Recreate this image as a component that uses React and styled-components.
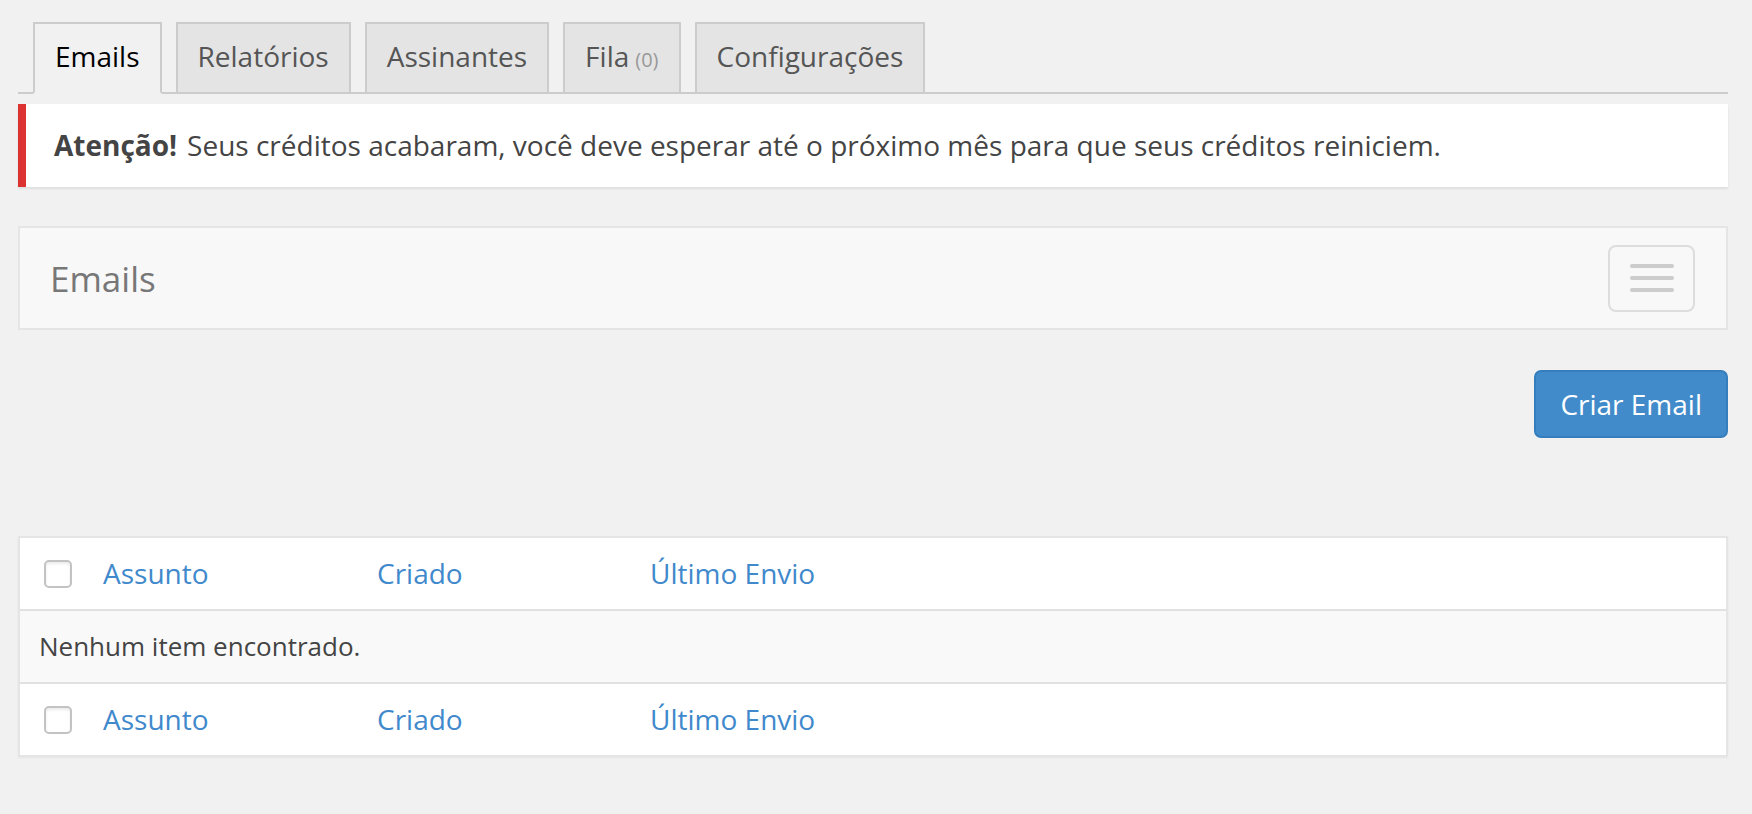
import React from 'react';
import styled, { createGlobalStyle } from 'styled-components';

const GlobalStyle = createGlobalStyle`
  html, body {
    margin: 0;
    padding: 0;
    background: #f1f1f1;
    font-family: 'Open Sans', 'Liberation Sans', sans-serif;
    color: #444;
  }
`;

const Page = styled.div`
  padding: 22px 24px 40px 18px;
`;

const TabBar = styled.nav`
  display: flex;
  border-bottom: 2px solid #ccc;
  padding-left: 15px;
`;

const Tab = styled.a`
  display: block;
  margin-right: 14px;
  margin-bottom: -2px;
  padding: 10px 20px;
  border: 2px solid #ccc;
  border-bottom: 2px solid ${p => (p.active ? '#f1f1f1' : '#ccc')};
  background: ${p => (p.active ? '#f1f1f1' : '#e4e4e4')};
  color: ${p => (p.active ? '#000' : '#555')};
  font-size: 28px;
  line-height: 45px;
  text-decoration: none;
  white-space: nowrap;
`;

const Count = styled.span`
  font-size: 20px;
  color: #999;
  margin-left: 6px;
`;

const Notice = styled.div`
  margin-top: 10px;
  padding: 2px 24px;
  background: #fff;
  border-left: 8px solid #dc3232;
  box-shadow: 0 2px 2px rgba(0, 0, 0, 0.08);

  p {
    margin: 16px 0;
    padding: 4px;
    font-size: 28px;
    line-height: 39px;
    color: #444;
  }

  strong {
    font-weight: 700;
    margin-right: 10px;
  }
`;

const Postbox = styled.div`
  margin-top: 39px;
  height: 100px;
  display: flex;
  align-items: center;
  justify-content: space-between;
  padding: 0 31px 0 30px;
  background: #f8f8f8;
  border: 2px solid #e5e5e5;
`;

const PanelTitle = styled.h2`
  margin: 0;
  font-size: 35px;
  font-weight: 400;
  color: #777;
`;

const MenuButton = styled.button`
  width: 87px;
  height: 67px;
  display: flex;
  flex-direction: column;
  align-items: center;
  justify-content: center;
  gap: 8px;
  padding: 0;
  background: transparent;
  border: 2px solid #ddd;
  border-radius: 8px;

  span {
    display: block;
    width: 44px;
    height: 4px;
    border-radius: 2px;
    background: #ccc;
  }
`;

const Actions = styled.div`
  display: flex;
  justify-content: flex-end;
  margin-top: 40px;
`;

const PrimaryButton = styled.button`
  height: 68px;
  padding: 0 24px;
  background: #428bca;
  border: 2px solid #357ebd;
  border-radius: 7px;
  color: #fff;
  font-family: 'Open Sans', 'Liberation Sans', sans-serif;
  font-size: 28px;
`;

const Table = styled.div`
  margin-top: 98px;
  background: #fff;
  border: 2px solid #e5e5e5;
  box-shadow: 0 1px 2px rgba(0, 0, 0, 0.05);
`;

const Row = styled.div`
  display: grid;
  grid-template-columns: 67px 274px 273px 1fr;
  align-items: center;
  height: 71px;
  background: ${p => (p.alt ? '#f9f9f9' : '#fff')};
  border-top: ${p => (p.first ? 'none' : '2px solid #e1e1e1')};
`;

const CheckCell = styled.div`
  padding-left: 24px;
  display: flex;
  align-items: center;
`;

const Checkbox = styled.span`
  display: block;
  width: 28px;
  height: 28px;
  box-sizing: border-box;
  border: 2px solid #c3c3c3;
  border-radius: 5px;
  background: #fff;
  box-shadow: inset 0 2px 3px rgba(0, 0, 0, 0.08);
`;

const HeadLink = styled.a`
  padding-left: 16px;
  font-size: 28px;
  line-height: 39px;
  color: #3f89cc;
  text-decoration: none;
`;

const EmptyCell = styled.div`
  grid-column: 1 / -1;
  padding-left: 19px;
  font-size: 26px;
  line-height: 39px;
  color: #444;
`;

const tabs = [
  { label: 'Emails', active: true },
  { label: 'Relatórios' },
  { label: 'Assinantes' },
  { label: 'Fila', count: 0 },
  { label: 'Configurações' },
];

const columns = ['Assunto', 'Criado', 'Último Envio'];

const HeaderRow = ({ first }) => (
  <Row first={first}>
    <CheckCell>
      <Checkbox />
    </CheckCell>
    {columns.map(c => (
      <HeadLink key={c} href="#">
        {c}
      </HeadLink>
    ))}
  </Row>
);

export default function App() {
  return (
    <Page>
      <GlobalStyle />
      <TabBar>
        {tabs.map(t => (
          <Tab key={t.label} href="#" active={t.active}>
            {t.label}
            {t.count !== undefined && <Count>({t.count})</Count>}
          </Tab>
        ))}
      </TabBar>

      <Notice>
        <p>
          <strong>Atenção!</strong>
          Seus créditos acabaram, você deve esperar até o próximo mês para que seus créditos reiniciem.
        </p>
      </Notice>

      <Postbox>
        <PanelTitle>Emails</PanelTitle>
        <MenuButton>
          <span />
          <span />
          <span />
        </MenuButton>
      </Postbox>

      <Actions>
        <PrimaryButton>Criar Email</PrimaryButton>
      </Actions>

      <Table>
        <HeaderRow first />
        <Row alt>
          <EmptyCell>Nenhum item encontrado.</EmptyCell>
        </Row>
        <HeaderRow />
      </Table>
    </Page>
  );
}
